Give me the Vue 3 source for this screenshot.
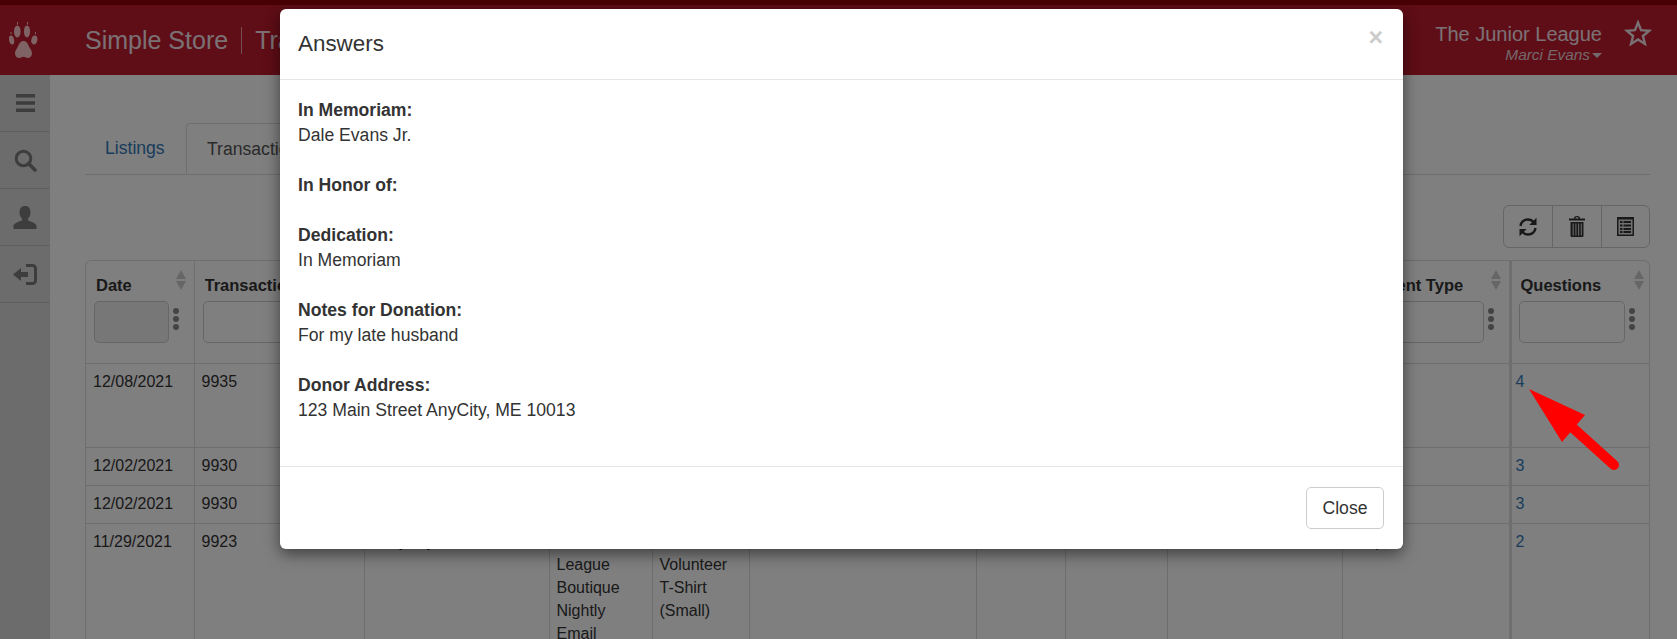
<template>
  <div class="page">
    <header class="topbar">
      <div class="brand-logo">
        <svg width="29" height="36" viewBox="0 0 29 36">
          <g fill="currentColor">
            <ellipse cx="8.300" cy="9.500" rx="3.300" ry="6" />
            <ellipse cx="18" cy="9.500" rx="3.100" ry="6" />
            <ellipse cx="2.600" cy="18" rx="2.500" ry="4.600" transform="rotate(-12 2.600 18)" />
            <ellipse cx="25.300" cy="18" rx="3" ry="4.600" transform="rotate(12 25.300 18)" />
            <path d="M14.500 19c3 0 4.300 2.800 5.400 5.200 1.200 2.500 3.100 4.200 3.100 7 0 2.900-2 4.800-4.300 4.800-1.700 0-2.700-1.200-4.200-1.200s-2.500 1.200-4.200 1.200C8 36 6 34.100 6 31.200c0-2.800 1.900-4.500 3.100-7 1.100-2.400 2.400-5.200 5.400-5.200z" />
            <rect x="8" y="0" width="1" height="2.600" />
            <rect x="18" y="0" width="1" height="2.600" />
            <rect x="1.500" y="10" width="1" height="2.200" />
            <rect x="26" y="10" width="1" height="2.200" />
          </g>
        </svg>
      </div>
      <div class="crumbs">
        <span class="app-name">Simple Store</span>
        <span class="crumb-sep"></span>
        <span class="app-name">Transactions</span>
      </div>
      <div class="account">
        <div class="org">The Junior League</div>
        <div class="user">Marci Evans<span class="caret"></span></div>
      </div>
      <svg class="star" width="28" height="27" viewBox="0 0 28 27">
        <path d="M14 3.500l3 7.700 8.300.5-6.400 5.300 2.100 8-7-4.500-7 4.500 2.100-8-6.400-5.300 8.300-.5z" fill="none" stroke="currentColor" stroke-width="2.400" />
      </svg>
    </header>

    <div class="main">
      <nav class="sidebar">
        <a class="side-item">
          <svg width="19" height="18" viewBox="0 0 19 18"><path d="M0 0h19v3.600H0zM0 7.200h19v3.600H0zM0 14.400h19V18H0z" fill="currentColor" /></svg>
        </a>
        <a class="side-item">
          <svg width="23" height="23" viewBox="0 0 23 23"><circle cx="9.500" cy="9.500" r="7.300" fill="none" stroke="currentColor" stroke-width="3" /><path d="M14.500 14.500l6.500 6.500" stroke="currentColor" stroke-width="3.600" stroke-linecap="round" /></svg>
        </a>
        <a class="side-item">
          <svg width="24" height="23" viewBox="0 0 24 23"><path d="M12 0c3.600 0 5.500 2.700 5.500 6.200 0 2.600-1 5-2.600 6.300v1.700c2.300 1.300 7.600 2.300 8.600 5.300v3.500H.5v-3.500c1-3 6.300-4 8.600-5.300v-1.700C7.500 11.200 6.500 8.800 6.500 6.200 6.500 2.700 8.400 0 12 0z" fill="currentColor" /></svg>
        </a>
        <a class="side-item">
          <svg width="24" height="21" viewBox="0 0 24 21"><path d="M0 10.500L8 4v4h7v5H8v4z" fill="currentColor" /><path d="M13 1.500h6.500a3 3 0 0 1 3 3v12a3 3 0 0 1-3 3H13" fill="none" stroke="currentColor" stroke-width="3" /></svg>
        </a>
      </nav>

      <section class="content">
        <ul class="tabs">
          <li class="tab">Listings</li>
          <li class="tab active">Transactions</li>
        </ul>

        <div class="toolbar">
          <div class="btn-group">
            <button class="tool-btn">
              <svg width="20" height="20" viewBox="0 0 20 20"><path d="M2.500 9C3 5 6 2.500 9.800 2.500c2.400 0 4.400 1 5.700 2.700" fill="none" stroke="currentColor" stroke-width="2.400" /><path d="M18.500.8v7.200h-7.200z" fill="currentColor" /><path d="M17.500 11c-.5 4-3.500 6.500-7.300 6.500-2.400 0-4.400-1-5.700-2.700" fill="none" stroke="currentColor" stroke-width="2.400" /><path d="M1.500 19.200V12h7.200z" fill="currentColor" /></svg>
            </button>
            <button class="tool-btn">
              <svg width="18" height="21" viewBox="0 0 18 21"><path d="M6 2.400C6 .8 7 0 9 0s3 .8 3 2.400h5V4.500H1V2.400zM7.400 2.400h3.200C10.500 1.600 10 1.300 9 1.300s-1.500.3-1.600 1.100z" fill="currentColor" fill-rule="evenodd" /><path d="M2.500 6h13v14a1 1 0 0 1-1 1h-11a1 1 0 0 1-1-1z" fill="currentColor" /><path d="M5.200 7.500V19.500M7.900 7.500V19.500M10.600 7.500V19.500M13.300 7.500V19.500" stroke="#fff" stroke-opacity=".75" stroke-width="1.100" /></svg>
            </button>
            <button class="tool-btn">
              <svg width="17" height="19" viewBox="0 0 17 19"><path d="M0 0h17v19H0z" fill="currentColor" /><path d="M1.500 2.500h14v15h-14z" fill="#fff" fill-opacity=".85" /><path d="M3 4h2.500v2H3zM6.500 4H14v2H6.500zM3 7.500h2.500v2H3zM6.500 7.500H14v2H6.500zM3 11h2.500v2H3zM6.500 11H14v2H6.500zM3 14h2.500v2H3zM6.500 14H14v2H6.500z" fill="currentColor" /></svg>
            </button>
          </div>
        </div>

        <div class="table-wrap">
          <table class="grid">
            <colgroup>
              <col v-for="c in columns" :key="c.label" :style="{ width: c.width + 'px' }" />
            </colgroup>
            <thead>
              <tr>
                <th v-for="(c, i) in columns" :key="c.label">
                  <div class="th-top">
                    <span class="th-label">{{ c.label }}</span>
                    <span class="sorter"><i class="up"></i><i class="down"></i></span>
                  </div>
                  <div class="th-filter">
                    <input class="filter" :class="{ disabled: i === 0 }" type="text" />
                    <span class="dots"><i></i><i></i><i></i></span>
                  </div>
                </th>
              </tr>
            </thead>
            <tbody>
              <tr v-for="r in rows" :key="r.id">
                <td v-for="(cell, j) in r.cells" :key="j">
                  <a v-if="j === r.cells.length - 1" class="link">{{ cell }}</a>
                  <template v-else>{{ cell }}</template>
                </td>
              </tr>
            </tbody>
          </table>
        </div>
      </section>
    </div>

    <div class="backdrop">
      <div class="modal">
        <div class="modal-head">
          <h4>Answers</h4>
          <span class="modal-x">×</span>
        </div>
        <div class="modal-body">
          <div v-for="a in answers" :key="a.q" class="answer">
            <strong>{{ a.q }}</strong>
            <div v-if="a.value">{{ a.value }}</div>
          </div>
        </div>
        <div class="modal-foot">
          <button class="close-btn">Close</button>
        </div>
      </div>
    </div>

    <svg class="pointer" width="100" height="90" viewBox="0 0 100 90">
      <path d="M3 3L59 29 36 56z" fill="#f00" />
      <path d="M47 42L88 79" stroke="#f00" stroke-width="10" stroke-linecap="round" />
    </svg>
  </div>
</template>

<script setup>
const columns = [
  { label: "Date", width: 108 },
  { label: "Transaction", width: 170 },
  { label: "Name", width: 185 },
  { label: "Listing", width: 103 },
  { label: "Item", width: 97 },
  { label: "Description", width: 227 },
  { label: "Qty", width: 89 },
  { label: "Total", width: 102 },
  { label: "Discount", width: 175 },
  { label: "Payment Type", width: 168 },
  { label: "Questions", width: 142 },
];

const rows = [
  { id: 1, cells: ["12/08/2021", "9935", "Marci Evans", "Memorial Donation Fund", "Donation", "", "1", "$25.00", "", "Swipe", "4"] },
  { id: 2, cells: ["12/02/2021", "9930", "Marci Evans", "Event", "Ticket", "", "1", "$10.00", "", "Swipe", "3"] },
  { id: 3, cells: ["12/02/2021", "9930", "Marci Evans", "Event", "Ticket", "", "1", "$10.00", "", "Swipe", "3"] },
  { id: 4, cells: ["11/29/2021", "9923", "Mary Fry", "Junior League Boutique Nightly Email", "Adult Volunteer T-Shirt (Small)", "", "1", "$15.00", "", "Swipe", "2"] },
];

const answers = [
  { q: "In Memoriam:", value: "Dale Evans Jr." },
  { q: "In Honor of:", value: "" },
  { q: "Dedication:", value: "In Memoriam" },
  { q: "Notes for Donation:", value: "For my late husband" },
  { q: "Donor Address:", value: "123 Main Street AnyCity, ME 10013" },
];
</script>

<style scoped>
.page {
  position: relative;
  width: 1677px;
  height: 639px;
  overflow: hidden;
  background: #fff;
  color: #333;
  font-family: "Liberation Sans", Arial, sans-serif;
  font-size: 16px;
  line-height: 23px;
}

/* top bar */
.topbar {
  display: flex;
  align-items: center;
  height: 70px;
  background: #be1a2c;
  border-top: 5px solid #900009;
  color: #fff;
}
.brand-logo {
  width: 76px;
  padding-left: 9px;
  display: flex;
  color: #ffc4c8;
}
.crumbs {
  display: flex;
  align-items: center;
  gap: 13px;
  flex: 1;
}
.app-name {
  font-size: 25px;
  color: #f6e2ea;
}
.crumb-sep {
  width: 1px;
  height: 27px;
  background: #e8a0a8;
}
.account {
  text-align: right;
  margin-right: 22px;
  margin-top: 6px;
}
.org {
  font-size: 20px;
  line-height: 24px;
  color: #f6e2ea;
}
.user {
  font-size: 15.400px;
  font-style: italic;
  line-height: 18px;
  color: #e8d0d8;
}
.caret {
  display: inline-block;
  margin-left: 2px;
  vertical-align: 2px;
  border-top: 5px solid #e8d0d8;
  border-left: 5px solid transparent;
  border-right: 5px solid transparent;
}
.star {
  color: #f0e0e4;
  margin-right: 25px;
  margin-top: -15px;
}

/* sidebar + content */
.main {
  display: flex;
  height: 564px;
}
.sidebar {
  width: 50px;
  flex: none;
  background: #d8d8d8;
}
.side-item {
  display: flex;
  align-items: center;
  justify-content: center;
  height: 56px;
  border-bottom: 1px solid #c0c0c0;
  color: #7a7a7a;
}
.content {
  flex: 1;
  padding: 48px 27px 0 35px;
  min-width: 0;
}

.tabs {
  display: flex;
  margin: 0;
  padding: 0;
  list-style: none;
  height: 51px;
  border-bottom: 1px solid #ddd;
}
.tab {
  width: 101px;
  height: 51px;
  box-sizing: border-box;
  padding: 13px 0 0 20px;
  font-size: 17.600px;
  line-height: 25px;
  color: #337ab7;
}
.tab.active {
  width: 180px;
  color: #555;
  background: #fff;
  border: 1px solid #ddd;
  border-bottom-color: #fff;
  border-radius: 4px 4px 0 0;
}

.toolbar {
  display: flex;
  justify-content: flex-end;
  margin-top: 30px;
}
.btn-group {
  display: flex;
  height: 43px;
  border: 1px solid #ccc;
  border-radius: 6px;
  box-sizing: border-box;
}
.tool-btn {
  width: 48.500px;
  padding: 0;
  display: flex;
  align-items: center;
  justify-content: center;
  background: transparent;
  border: 0;
  border-left: 1px solid #ccc;
  color: #333;
}
.tool-btn:first-child {
  border-left: 0;
}

.table-wrap {
  margin-top: 12px;
  border: 1px solid #ddd;
  border-bottom: 0;
  border-radius: 6px 6px 0 0;
  overflow: hidden;
}
.grid {
  table-layout: fixed;
  width: 1566px;
  border-collapse: collapse;
}
.grid th,
.grid td {
  border-left: 1px solid #ddd;
  text-align: left;
  vertical-align: top;
}
.grid th:first-child,
.grid td:first-child {
  border-left: 0;
}
.grid th:last-child,
.grid td:last-child {
  border-left-width: 3px;
}
.grid th {
  height: 102px;
  box-sizing: border-box;
  padding: 8px 15px 0 10px;
  font-size: 16.500px;
  font-weight: 700;
  color: #333;
  border-bottom: 1px solid #ddd;
}
.grid th:last-child {
  padding: 8px 17px 0 9px;
}
.grid td {
  padding: 6px 7px 8px;
  border-bottom: 1px solid #ddd;
}
.grid td:last-child {
  padding-left: 4px;
}
.th-top {
  display: flex;
  justify-content: space-between;
  height: 32px;
  line-height: 33px;
  white-space: nowrap;
}
.th-label {
  overflow: hidden;
}
.sorter {
  display: flex;
  flex-direction: column;
  gap: 2px;
  padding-top: 1px;
  flex: none;
  margin-right: -7px;
}
.grid th:last-child .sorter {
  margin-right: -9px;
}
.sorter i {
  display: block;
  width: 0;
  border-left: 5px solid transparent;
  border-right: 5px solid transparent;
}
.sorter .up {
  border-bottom: 9px solid #ccc;
}
.sorter .down {
  border-top: 9px solid #ccc;
}
.th-filter {
  display: flex;
  align-items: center;
  gap: 4px;
  margin-left: -2px;
}
.filter {
  flex: 1;
  min-width: 0;
  height: 42px;
  box-sizing: border-box;
  border: 1px solid #ccc;
  border-radius: 5px;
  background: #fff;
  padding: 0;
}
.filter.disabled {
  background: #eee;
}
.dots {
  display: flex;
  flex-direction: column;
  gap: 2px;
  flex: none;
  margin-top: -6px;
}
.dots i {
  display: block;
  width: 6px;
  height: 6px;
  border-radius: 50%;
  background: #888;
}
.link {
  color: #337ab7;
}

/* modal */
.backdrop {
  position: absolute;
  inset: 0;
  background: rgba(0, 0, 0, 0.5);
}
.modal {
  width: 1123px;
  height: 540px;
  margin: 9px 0 0 280px;
  display: flex;
  flex-direction: column;
  box-sizing: border-box;
  background: #fff;
  border-radius: 6px;
  box-shadow: 0 5px 15px rgba(0, 0, 0, 0.5);
}
.modal-head {
  display: flex;
  align-items: center;
  justify-content: space-between;
  height: 70px;
  flex: none;
  padding: 0 18px;
  border-bottom: 1px solid #e5e5e5;
}
.modal-head h4 {
  margin: 0 0 2px;
  font-size: 22.400px;
  font-weight: 400;
  color: #333;
}
.modal-x {
  font-size: 25px;
  font-weight: 700;
  color: #000;
  opacity: 0.2;
  margin-top: -14px;
  margin-right: 2px;
}
.modal-body {
  flex: 1;
  padding: 18px 18px 0;
  font-size: 17.600px;
  line-height: 25px;
}
.answer {
  margin-bottom: 25px;
}
.modal-foot {
  display: flex;
  justify-content: flex-end;
  align-items: center;
  height: 83px;
  flex: none;
  box-sizing: border-box;
  padding: 0 19px;
  border-top: 1px solid #e5e5e5;
}
.close-btn {
  width: 78px;
  height: 42px;
  border: 1px solid #ccc;
  border-radius: 5px;
  background: #fff;
  color: #333;
  font: inherit;
  font-size: 17.600px;
}

.pointer {
  position: absolute;
  left: 1526px;
  top: 386px;
}
</style>
